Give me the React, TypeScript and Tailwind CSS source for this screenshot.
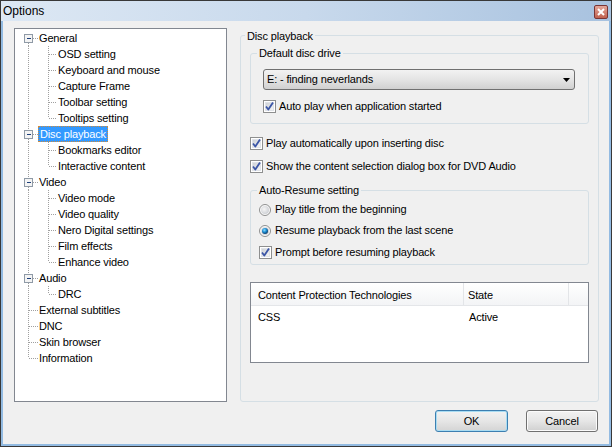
import React from 'react';

type Node = { t: string; lvl: 0 | 1; box?: boolean; lastChild?: boolean };

const tree: Node[] = [
  { t: 'General', lvl: 0, box: true },
  { t: 'OSD setting', lvl: 1 },
  { t: 'Keyboard and mouse', lvl: 1 },
  { t: 'Capture Frame', lvl: 1 },
  { t: 'Toolbar setting', lvl: 1 },
  { t: 'Tooltips setting', lvl: 1, lastChild: true },
  { t: 'Disc playback', lvl: 0, box: true },
  { t: 'Bookmarks editor', lvl: 1 },
  { t: 'Interactive content', lvl: 1, lastChild: true },
  { t: 'Video', lvl: 0, box: true },
  { t: 'Video mode', lvl: 1 },
  { t: 'Video quality', lvl: 1 },
  { t: 'Nero Digital settings', lvl: 1 },
  { t: 'Film effects', lvl: 1 },
  { t: 'Enhance video', lvl: 1, lastChild: true },
  { t: 'Audio', lvl: 0, box: true },
  { t: 'DRC', lvl: 1, lastChild: true },
  { t: 'External subtitles', lvl: 0 },
  { t: 'DNC', lvl: 0 },
  { t: 'Skin browser', lvl: 0 },
  { t: 'Information', lvl: 0 },
];

const dot = { stroke: '#a0a0a0', strokeWidth: 1, strokeDasharray: '1 1', shapeRendering: 'crispEdges' as const };

function RootCell({ up, down, box, stub }: { up: boolean; down: boolean; box?: boolean; stub?: boolean }) {
  return (
    <svg width="18" height="16" className="shrink-0">
      {up && <line x1="8.5" y1="0" x2="8.5" y2={box ? 4 : 8} {...dot} />}
      {down && <line x1="8.5" y1={box ? 13 : 8} x2="8.5" y2="16" {...dot} />}
      {stub && <line x1={box ? 13 : 9} y1="8.5" x2="18" y2="8.5" {...dot} />}
      {box && (
        <>
          <rect x="4.5" y="4.5" width="8" height="8" fill="#f4f4f4" stroke="#8f9aa6" shapeRendering="crispEdges" />
          <line x1="6.5" y1="8.5" x2="10.5" y2="8.5" stroke="#1c3f7a" shapeRendering="crispEdges" />
        </>
      )}
    </svg>
  );
}

function ChildCell({ last }: { last?: boolean }) {
  return (
    <svg width="19" height="16" className="shrink-0">
      <line x1="10.5" y1="0" x2="10.5" y2={last ? 8 : 16} {...dot} />
      <line x1="11" y1="8.5" x2="19" y2="8.5" {...dot} />
    </svg>
  );
}

function Tree() {
  return (
    <div className="w-[213px] h-[374px] shrink-0 bg-white border border-[#828790] pl-[5px] pt-[1px]">
      {tree.map((n, i) => {
        const selected = n.t === 'Disc playback';
        const isLastRoot = i === tree.length - 1;
        return (
          <div key={n.t} className="flex h-[16px] items-center">
            {n.lvl === 0 ? (
              <RootCell up={i > 0} down={!isLastRoot} box={n.box} stub />
            ) : (
              <>
                <RootCell up down />
                <ChildCell last={n.lastChild} />
              </>
            )}
            <span
              className={
                selected
                  ? 'h-[16px] leading-[14px] px-[1px] bg-[#3399ff] text-white border border-dotted border-[#d08a3a] whitespace-nowrap'
                  : 'h-[16px] leading-[16px] px-[1px] whitespace-nowrap'
              }
            >
              {n.t}
            </span>
          </div>
        );
      })}
    </div>
  );
}

function Check() {
  return (
    <svg width="13" height="13" className="shrink-0">
      <rect x="0.5" y="0.5" width="12" height="12" fill="#ffffff" stroke="#8e8f8f" shapeRendering="crispEdges" />
      <defs>
        <linearGradient id="cbg" x1="0" y1="0" x2="1" y2="1">
          <stop offset="0" stopColor="#cbcfd5" />
          <stop offset="1" stopColor="#f6f6f6" />
        </linearGradient>
      </defs>
      <rect x="2.5" y="2.5" width="8" height="8" fill="url(#cbg)" stroke="#e0e3e8" shapeRendering="crispEdges" />
      <path d="M3 6.5 L5.3 9.5 L10 2.5" fill="none" stroke="#3b55a6" strokeWidth="1.8" strokeLinejoin="round" />
    </svg>
  );
}

function Radio({ on }: { on?: boolean }) {
  return (
    <svg width="12" height="12" className="shrink-0">
      <defs>
        <radialGradient id="rbg" cx="0.4" cy="0.4" r="0.7">
          <stop offset="0" stopColor="#f6f6f6" />
          <stop offset="1" stopColor="#c9ccd1" />
        </radialGradient>
        <radialGradient id="rdot" cx="0.4" cy="0.35" r="0.7">
          <stop offset="0" stopColor="#8fe0ff" />
          <stop offset="0.5" stopColor="#1a8ad0" />
          <stop offset="1" stopColor="#08305a" />
        </radialGradient>
      </defs>
      <circle cx="6" cy="6" r="5.5" fill="#fbfbfb" stroke="#8e8f8f" />
      <circle cx="6" cy="6" r="4" fill="url(#rbg)" />
      {on && <circle cx="6" cy="6" r="3" fill="url(#rdot)" />}
    </svg>
  );
}

function CheckRow({ label }: { label: string }) {
  return (
    <div className="flex h-[13px] items-center gap-[3px] whitespace-nowrap">
      <Check />
      <span>{label}</span>
    </div>
  );
}

function RadioRow({ label, on }: { label: string; on?: boolean }) {
  return (
    <div className="flex h-[13px] items-center gap-[4px] whitespace-nowrap">
      <Radio on={on} />
      <span>{label}</span>
    </div>
  );
}

function Button({ label, primary }: { label: string; primary?: boolean }) {
  return (
    <div
      className={
        primary
          ? 'h-[22px] w-[73px] flex items-center justify-center rounded-[3px] border border-[#3c7fb1] bg-gradient-to-b from-[#f2f2f2] via-[#e6e6e6] to-[#d4d4d4] shadow-[inset_0_0_0_1px_#a9dcf2]'
          : 'h-[22px] w-[72px] flex items-center justify-center rounded-[3px] border border-[#707070] bg-gradient-to-b from-[#f2f2f2] via-[#e6e6e6] to-[#d0d0d0] shadow-[inset_0_0_0_1px_#fbfbfb]'
      }
    >
      {label}
    </div>
  );
}

export default function App() {
  return (
    <div className="w-[612px] h-[447px] flex flex-col border border-[#383838] bg-[#f0f0f0] text-[11px] tracking-[-0.15px] text-black font-['Liberation_Sans',Arial,sans-serif]">
      <div className="h-[20px] shrink-0 flex items-start justify-between pl-[2px] pr-[3px] bg-gradient-to-r from-[#dde8f4] via-[#c8d9ec] to-[#a8c2df]">
        <span className="text-[12px] leading-[21px] tracking-normal">Options</span>
        <div className="mt-[4px] w-[14px] h-[14px] rounded-[2px] border border-[#7a3535] bg-gradient-to-b from-[#e4a79b] to-[#c0614f] flex items-center justify-center">
          <svg width="8" height="8">
            <path d="M1 1 L7 7 M7 1 L1 7" stroke="#ffffff" strokeWidth="2" />
          </svg>
        </div>
      </div>

      <div className="flex-1 flex flex-col border-x-2 border-b-2 border-[#93bbe2] pl-[11px] pr-[10px] pt-[7px]">
        <div className="flex gap-[13px] h-[374px]">
          <Tree />

          <fieldset className="w-[359px] h-[374px] min-w-0 border border-[#d5dfe5] rounded-[3px] px-[9px]">
            <legend className="-ml-[5px] px-[2px] h-[14px] leading-[14px] pt-[1px]">Disc playback</legend>

            <fieldset className="mt-[5px] border border-[#d5dfe5] rounded-[3px] pl-[12px] pr-[13px] pb-[10px]">
              <legend className="-ml-[6px] px-[2px] h-[13px] leading-[13px]">Default disc drive</legend>
              <div className="mt-[9px] h-[21px] flex items-center justify-between rounded-[3px] border border-[#707070] bg-gradient-to-b from-[#f2f2f2] via-[#e4e4e4] to-[#d0d0d0] pl-[3px] pr-[4px]">
                <span>E: - finding neverlands</span>
                <svg width="7" height="4">
                  <path d="M0 0 H7 L3.5 4 Z" fill="#000000" />
                </svg>
              </div>
              <div className="mt-[10px]">
                <CheckRow label="Auto play when application started" />
              </div>
            </fieldset>

            <div className="mt-[13px] flex flex-col gap-[10px]">
              <CheckRow label="Play automatically upon inserting disc" />
              <CheckRow label="Show the content selection dialog box for DVD Audio" />
            </div>

            <fieldset className="mt-[11px] border border-[#d5dfe5] rounded-[3px] pl-[8px] pb-[5px]">
              <legend className="-ml-[2px] px-[2px] h-[13px] leading-[13px]">Auto-Resume setting</legend>
              <div className="mt-[6px]">
                <RadioRow label="Play title from the beginning" />
              </div>
              <div className="mt-[8px]">
                <RadioRow label="Resume playback from the last scene" on />
              </div>
              <div className="mt-[9px]">
                <CheckRow label="Prompt before resuming playback" />
              </div>
            </fieldset>

            <div className="mt-[17px] h-[81px] bg-white border border-[#828790]">
              <div className="flex h-[23px] bg-gradient-to-b from-[#ffffff] to-[#f3f4f6] border-b border-[#e4e6e9]">
                <div className="w-[213px] pl-[7px] pt-[3px] flex items-center border-r border-[#e3e5e8]">Content Protection Technologies</div>
                <div className="w-[105px] pl-[4px] pt-[3px] flex items-center border-r border-[#e3e5e8]">State</div>
                <div className="flex-1" />
              </div>
              <div className="flex h-[23px] items-center">
                <div className="w-[213px] pl-[7px]">CSS</div>
                <div className="pl-[5px]">Active</div>
              </div>
            </div>
          </fieldset>
        </div>

        <div className="flex justify-end gap-[18px] mt-[8px] mr-[1px]">
          <Button label="OK" primary />
          <Button label="Cancel" />
        </div>
      </div>
    </div>
  );
}
